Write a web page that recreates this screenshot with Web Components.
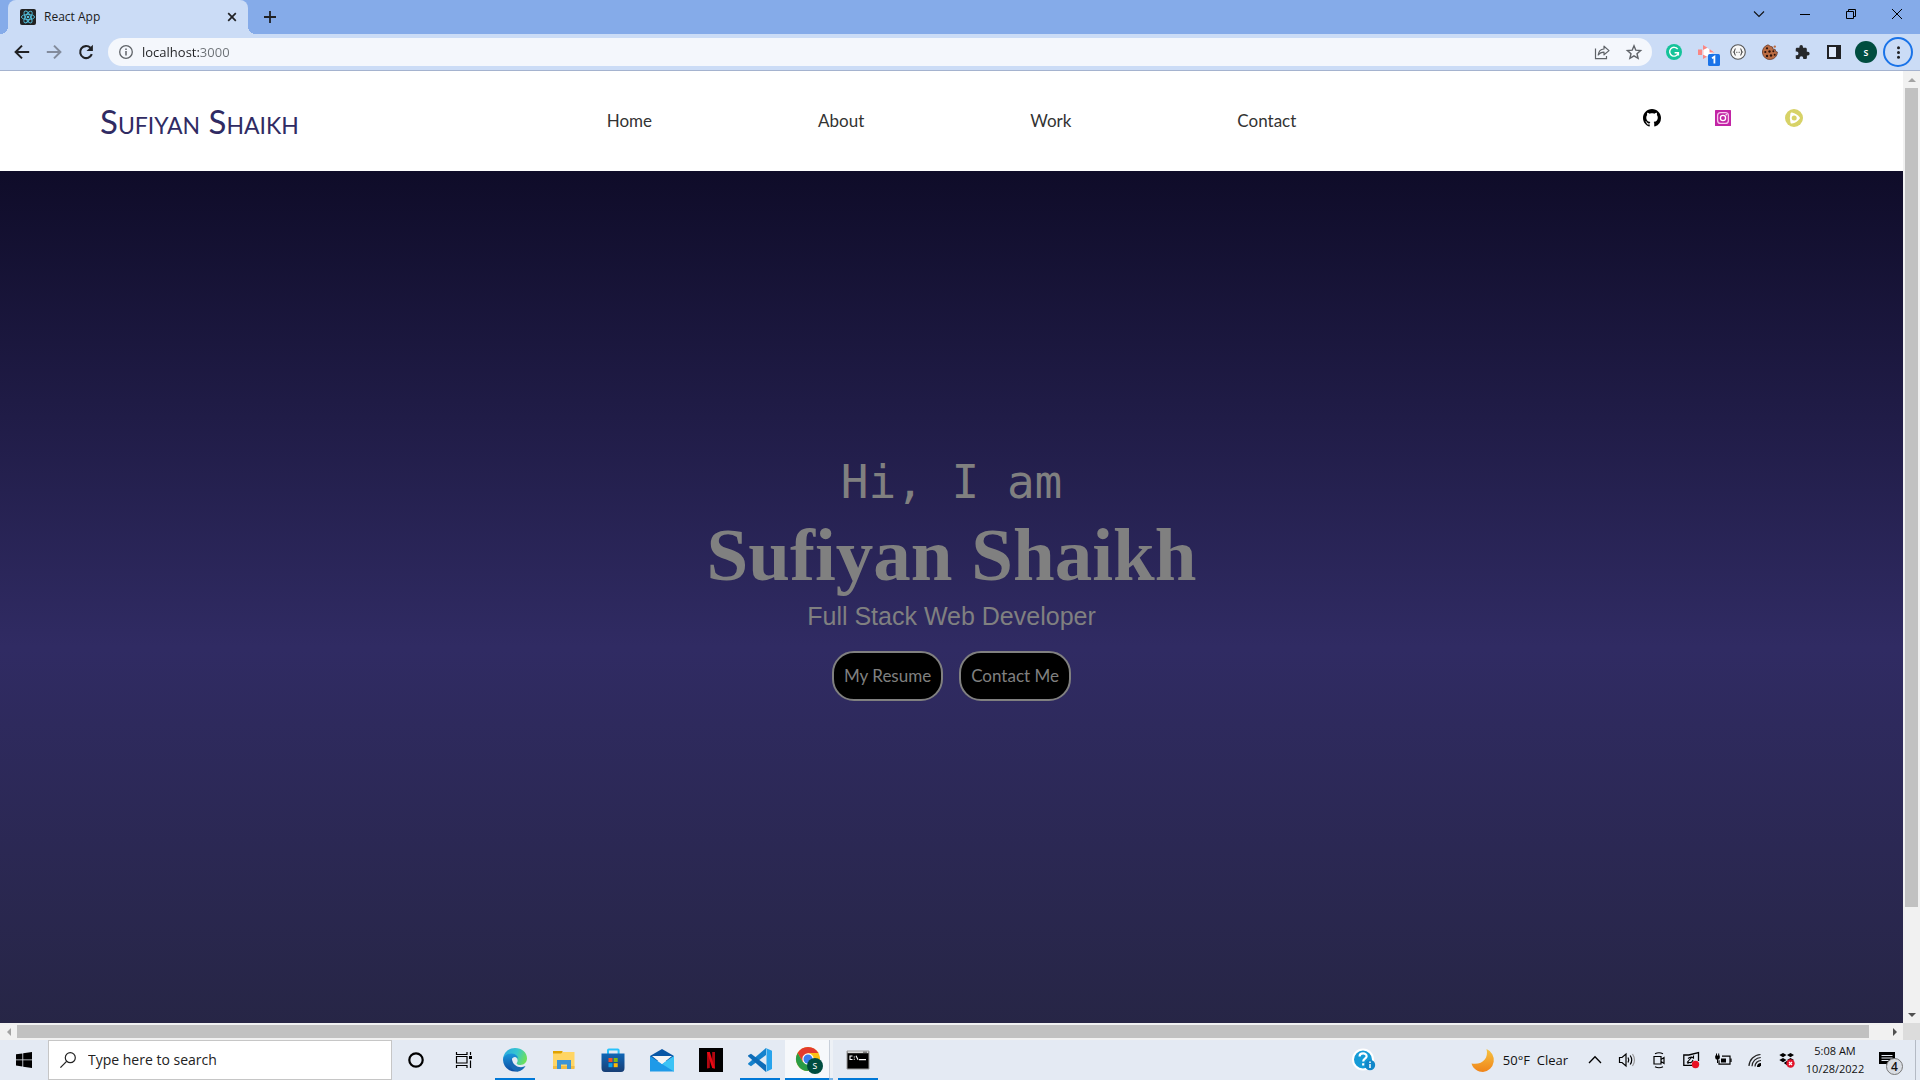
<!DOCTYPE html>
<html lang="en">
<head>
<meta charset="utf-8">
<title>React App</title>
<style>
html, body { margin: 0; height: 100%; }
body { display: flex; flex-direction: column; overflow: hidden; font-family: "Open Sans", "Noto Sans", sans-serif; color: #1b1b1b; }
browser-frame { flex: 1; min-height: 0; }
</style>
</head>
<body>
<browser-frame>
  <tab-strip slot="chrome"></tab-strip>
  <address-bar slot="chrome"></address-bar>
  <site-header></site-header>
  <hero-banner></hero-banner>
</browser-frame>
<task-bar></task-bar>

<script>
const ICONS = {
  react: ['0 0 16 16', '<rect width="16" height="16" rx="2" fill="#222"/><g fill="none" stroke="#53c1de" stroke-width=".9"><ellipse cx="8" cy="8" rx="6.6" ry="2.6"/><ellipse cx="8" cy="8" rx="6.6" ry="2.6" transform="rotate(60 8 8)"/><ellipse cx="8" cy="8" rx="6.6" ry="2.6" transform="rotate(120 8 8)"/></g><circle cx="8" cy="8" r="1.3" fill="#53c1de"/>'],
  close: ['0 0 10 10', '<path d="M1.2 1.2l7.6 7.6M8.8 1.2L1.2 8.8" stroke="#202124" stroke-width="1.7"/>'],
  plus: ['0 0 12 12', '<path d="M6 0v12M0 6h12" stroke="#202124" stroke-width="1.8"/>'],
  chevron: ['0 0 12 12', '<path d="M1 3.5l5 5 5-5" fill="none" stroke="#111" stroke-width="1.1"/>'],
  minimise: ['0 0 10 10', '<path d="M0 5.5h10" stroke="#000"/>'],
  restore: ['0 0 10 10', '<path d="M.5 2.5h7v7h-7zM2.5 2.5v-2h7v7h-2" fill="none" stroke="#000"/>'],
  exit: ['0 0 10 10', '<path d="M0 0l10 10M10 0L0 10" stroke="#000"/>'],
  back: ['0 0 16 16', '<path d="M15.2 8H2M8 1.6L1.6 8 8 14.4" fill="none" stroke="#202124" stroke-width="2"/>'],
  forward: ['0 0 16 16', '<path d="M.8 8H14M8 1.6L14.4 8 8 14.4" fill="none" stroke="#828b9c" stroke-width="2"/>'],
  reload: ['0 0 16 16', '<path d="M13.8 10.2A6 6 0 1 1 12.4 3.8" fill="none" stroke="#202124" stroke-width="2.1"/><path d="M14.9.7v6.4H8.5z" fill="#202124"/>'],
  info: ['0 0 14 14', '<circle cx="7" cy="7" r="6.3" fill="none" stroke="#5f6368" stroke-width="1.3"/><path d="M7 6v4.4M7 3.4V5" stroke="#5f6368" stroke-width="1.5"/>'],
  share: ['0 0 16 16', '<path d="M1.5 4.5v10.2h11V12" fill="none" stroke="#5f6368" stroke-width="1.2"/><path d="M4.2 11C4.6 7.2 6.6 5.2 10 5V2.2l5 4.4-5 4.2V8.2C7.4 8.2 5.6 9 4.2 11z" fill="none" stroke="#5f6368" stroke-width="1.2" stroke-linejoin="round"/>'],
  star: ['0 0 16 16', '<path d="M8 1.8l1.8 4.4 4.8.4-3.6 3.1 1.1 4.6L8 11.8l-4.1 2.5L5 9.7 1.4 6.6l4.8-.4z" fill="none" stroke="#5f6368" stroke-width="1.4"/>'],
  grammarly: ['0 0 16 16', '<circle cx="8" cy="8" r="8" fill="#15c39a"/><path d="M11.7 5.2A4.4 4.4 0 1 0 12.3 9M8.6 8.8h3.8v2.8" fill="none" stroke="#fff" stroke-width="1.4"/>'],
  recorder: ['-3 0 22 22', '<path d="M5 4.5L16 11 5 17.500z" fill="#fff"/><path d="M0 8.500h4v5.500H0zM5 4l4.500 2.800L5 9zM11.500 8l5 3.500h-5zM5 18v-4.500l4 2.300z" fill="#fa8784"/><path d="M5 9v4.500" stroke="#ffc4c2" stroke-width="1"/><rect x="10" y="13" width="12" height="12" rx="1.500" fill="#1a73e8"/><path d="M14 17.200l2.400-1.500V22.500" fill="none" stroke="#fff" stroke-width="1.800"/>'],
  braces: ['0 0 16 16', '<circle cx="8" cy="8" r="7.300" fill="#f8f8f8" stroke="#555" stroke-width="1.100"/><path d="M5.700 4.800c-1.400 0-.6 2.600-1.900 3.200 1.300.6.5 3.200 1.900 3.200M10.300 4.800c1.400 0 .6 2.600 1.900 3.200-1.300.6-.5 3.200-1.900 3.200" fill="none" stroke="#444" stroke-width="1.100"/><path d="M6 8.300h4" stroke="#777" stroke-dasharray="1 .5"/>'],
  cookie: ['0 0 16 16', '<path d="M6 .8A7.500 7.500 0 1 0 15.400 8l-1.700-.6-.5-2-2.300-.3-.3-2.100-2.200-.7z" fill="#bb6c43" stroke="#5c2d1c" stroke-width=".7"/><circle cx="12.800" cy="2.600" r="1.200" fill="#bb6c43"/><g fill="#2b130d"><circle cx="5" cy="4.300" r="1.100"/><circle cx="3.300" cy="8" r="1.100"/><circle cx="7.500" cy="7.500" r="1.200"/><circle cx="11.300" cy="7.300" r="1"/><circle cx="5" cy="12" r="1.200"/><circle cx="9" cy="11.500" r="1.200"/><circle cx="12.700" cy="10.700" r="1"/></g>'],
  puzzle: ['0 0 16 16', '<path d="M13.600 7.300h-1V4.400c0-.8-.6-1.400-1.400-1.400H8.500V2a1.900 1.900 0 0 0-3.800 0v1H2.200C1.400 3 .8 3.600.8 4.400V7h.9a2 2 0 0 1 0 4H.8v2.600c0 .8.6 1.400 1.400 1.400h2.600v-1a2 2 0 0 1 4 0v1h2.500c.8 0 1.400-.6 1.400-1.400v-2.500h1a1.900 1.900 0 0 0 0-3.800z" fill="#26282b"/>'],
  panel: ['0 0 14 14', '<path d="M1 1h12v12H1z" fill="#dfe9fa" stroke="#202124" stroke-width="2"/><path d="M9 1h5v12H9z" fill="#202124"/>'],
  dots: ['0 0 16 16', '<g fill="#202124"><circle cx="8" cy="3" r="1.600"/><circle cx="8" cy="8" r="1.600"/><circle cx="8" cy="13" r="1.600"/></g>'],
  github: ['0 0 16 16', '<path fill-rule="evenodd" d="M8 0C3.580 0 0 3.580 0 8c0 3.540 2.290 6.530 5.470 7.590.4.070.55-.17.55-.38 0-.19-.01-.82-.01-1.490-2.010.37-2.530-.49-2.690-.94-.09-.23-.48-.94-.82-1.130-.28-.15-.68-.52-.01-.53.63-.01 1.080.58 1.230.82.72 1.210 1.870.87 2.330.66.070-.52.28-.87.51-1.070-1.780-.2-3.640-.89-3.640-3.950 0-.87.31-1.590.82-2.150-.08-.2-.36-1.020.08-2.120 0 0 .67-.21 2.200.82.64-.18 1.320-.27 2-.27s1.360.09 2 .27c1.530-1.040 2.200-.82 2.200-.82.44 1.100.16 1.920.08 2.120.51.56.82 1.270.82 2.150 0 3.070-1.870 3.750-3.650 3.950.29.25.54.73.54 1.480 0 1.070-.01 1.930-.01 2.200 0 .21.15.46.55.38A8.010 8.010 0 0 0 16 8c0-4.420-3.580-8-8-8z"/>'],
  instagram: ['0 0 18 18', '<rect x="1" y="1" width="16" height="16" rx=".6" fill="#c224a5"/><rect x="3.600" y="3.600" width="10.800" height="10.800" rx="3" fill="none" stroke="#f6c6ec" stroke-width="1.300"/><circle cx="9" cy="9" r="2.600" fill="none" stroke="#fff" stroke-width="1.300"/><circle cx="12.200" cy="5.800" r=".8" fill="#fff"/>'],
  player: ['0 0 18 18', '<circle cx="9" cy="9" r="9" fill="#d7d267"/><path d="M6.700 4.700c2.600.5 5.300 2.100 7 4.300-1.700 2.300-4.400 3.900-7 4.400-.9-2.800-.9-5.900 0-8.700z" fill="#fff" stroke="#fff" stroke-width="2.400" stroke-linejoin="round"/><circle cx="9.200" cy="9" r="2.500" fill="#d7d267"/>'],
  windows: ['0 0 16 16', '<path d="M0 2.300l6.400-.9v6.100H0zM7.200 1.300L16 0v7.500H7.200zM0 8.300h6.400v6.200L0 13.600zM7.200 8.300H16V16l-8.800-1.300z"/>'],
  search: ['0 0 16 16', '<circle cx="10.300" cy="5.700" r="5" fill="none" stroke="#222" stroke-width="1.200"/><path d="M6.600 9.400L.4 15.600" stroke="#222" stroke-width="1.300"/>'],
  cortana: ['0 0 16 16', '<circle cx="8" cy="8" r="6.700" fill="none" stroke="#000" stroke-width="2.200"/>'],
  taskview: ['0 0 16 16', '<path d="M.5 0v2.500h10.500V0M.5 16v-2.500h10.500V16M.5 4.500h10.500v6.500H.5z" fill="none" stroke="#000" stroke-width="1.200"/><path d="M14.500 0v3M14.500 8.500V16" stroke="#000" stroke-width="1.200"/><path d="M13 4h3v3h-3z"/>'],
  edge: ['0 0 24 24', '<defs><linearGradient id="a" x1="0" y1=".2" x2="1" y2=".5"><stop offset="0" stop-color="#2aa9e0"/><stop offset=".55" stop-color="#36c6cf"/><stop offset="1" stop-color="#6ee05a"/></linearGradient><linearGradient id="b" x1="0" y1="0" x2="0" y2="1"><stop offset="0" stop-color="#1b98dd"/><stop offset="1" stop-color="#0c4aa0"/></linearGradient></defs><path d="M0 11C.7 4.500 5.800 0 12 0c7 0 12 4.800 12 10.300 0 4-3 6.700-6.600 6.700-2.800 0-4.200-1.100-3.600-2 1.900-2.700.5-6.500-4-6.500C5.400 8.500 1.500 9.500 0 11z" fill="url(#a)"/><path d="M0 12C0 8.700 3.800 5.500 8.500 5.500c4.400 0 6.800 3.200 6.800 6 0-1.500-1.800-2.800-3.500-2.600C8.500 9.300 7.400 13 8.800 16.500c1.500 3.800 5.500 6 9.500 5.300A12 12 0 0 1 0 12z" fill="url(#b)"/><path d="M8.800 10.500C5 15 8 22.500 14.300 23.700 18 23.300 21 21 22.500 18c-4.600 2.600-12.700 1-13.700-7.500z" fill="#1668b4"/>'],
  folder: ['0 0 24 24', '<path d="M1 3h9.500v4H1z" fill="#e0a200"/><path d="M1 5.500h8l2-1.500h11.500v16H1z" fill="#ffd564"/><path d="M1 18h21.500v3H1z" fill="#f3bd43"/><path d="M5 21v-9h14v9h-4v-4.500H9V21z" fill="#3c94d6"/>'],
  store: ['0 0 24 24', '<path d="M7 7V2.200Q7 1.500 7.800 1.500h9q.8 0 .8.700V7" fill="none" stroke="#28c2fb" stroke-width="2"/><defs><linearGradient id="s" x1="0" y1="0" x2="0" y2="1"><stop offset="0" stop-color="#0f66b6"/><stop offset="1" stop-color="#183f75"/></linearGradient></defs><path d="M.5 5.500h23V20q0 4-3.500 4H4Q.5 24 .5 20z" fill="url(#s)"/><path d="M7.500 10h4v4h-4z" fill="#f2502b"/><path d="M12.700 10h4v4h-4z" fill="#80ba13"/><path d="M7.500 15.200h4v4h-4z" fill="#08a3ef"/><path d="M12.700 15.200h4v4h-4z" fill="#feb903"/>'],
  mail: ['0 0 24 24', '<path d="M0 8L12 1l12 7v5H0z" fill="#0957a5"/><path d="M0 8v15.500h24V8L12 16z" fill="#1e9ae8"/><path d="M12 16l12-8v15.500z" fill="#3cc3f5"/><path d="M2 8h20l-10 8z" fill="#f5f5f5"/>'],
  netflix: ['0 0 24 24', '<path d="M0 0h24v24H0z"/><path d="M8 4h2.800v16L8 20.400zM13.200 4H16v16.400l-2.800-.4z" fill="#b00710"/><path d="M8 4h2.800L16 20.400l-2.800-.4z" fill="#e50914"/>'],
  vscode: ['0 0 24 24', '<path d="M18 0v7L3 18.200.3 16.500q-.5-.7 0-1.300z" fill="#1482cd"/><path d="M18 24v-7L3 5.700.3 7.300q-.5.600 0 1.300z" fill="#0d6cb8"/><path d="M17.700 0L24 2.800v18.300L17.700 24q1.200-.7.8-3V3q.2-2.200-.8-3z" fill="#27a3ec"/>'],
  chrome: ['0 0 26 26', '<circle cx="12" cy="12" r="12" fill="#fbc116"/><path d="M12 6h10.400a12 12 0 0 0-20.800 0l5.200 9z" fill="#e33b2e"/><path d="M1.600 6A12 12 0 0 0 12 24l5.200-9-10.400 0z" fill="#2a9c47"/><circle cx="12" cy="12" r="5.700" fill="#fff"/><circle cx="12" cy="12" r="4.500" fill="#3b7ded"/>'],
  cmd: ['0 0 24 24', '<path d="M1 3h22v18H1z" stroke="#9a9a9a"/><path d="M1.500 3.200h21v2h-21z" fill="#d8d8d8"/><path d="M17 4.200h4" stroke="#555"/><path d="M6.500 8H4v3.500h2.500M8.300 8.500v1M8.300 10.800v1M10 7.800l2 4M13 11.600h7" fill="none" stroke="#fff" stroke-width="1.100"/>'],
  help: ['0 0 24 24', '<circle cx="11" cy="11.500" r="10" fill="#159bd7" stroke="#fff" stroke-width="2"/><path d="M7.600 8.500c0-4 7-4 7-.3 0 2.600-3.400 2.500-3.400 5.300M11.200 15.300v2.200" fill="none" stroke="#fff" stroke-width="2.200"/><circle cx="18" cy="17" r="5.200" fill="#1187c9"/><path d="M18 16v4M18 13.500V15" stroke="#fff" stroke-width="1.500"/>'],
  moon: ['0 0 24 24', '<defs><linearGradient id="m" x1="0" y1="0" x2="0" y2="1"><stop offset="0" stop-color="#f5c342"/><stop offset="1" stop-color="#f08419"/></linearGradient></defs><path d="M15.500 1A12 12 0 0 1 12 24C7 24 2 21 .5 15.500C11 17.500 18 10.500 15.500 1z" fill="url(#m)"/>'],
  caret: ['0 0 16 16', '<path d="M2 11l6-6.300L14 11" fill="none" stroke="#000" stroke-width="1.300"/>'],
  volume: ['0 0 18 18', '<path d="M1.500 6.500H4l4-3.500v12l-4-3.500H1.500z" fill="none" stroke="#000" stroke-width="1.200"/><path d="M10 6.500q1.500 2.500 0 5M12.200 4.500q3 4.500 0 9" fill="none" stroke="#000" stroke-width="1.200"/><path d="M14.500 3q4 6 0 12" fill="none" stroke="#999" stroke-width="1.200"/>'],
  camera: ['0 0 16 16', '<path d="M3 4.500h7v7.500H3zM10 7.500l3-2v6l-3-2" fill="none" stroke="#000" stroke-width="1.200"/><path d="M4 1.700Q8-.3 12 1.700M4 14.700q4 2 8 0" fill="none" stroke="#000" stroke-width="1.100"/>'],
  update: ['0 0 18 18', '<path d="M11 14.300H1.800V4h5L16.500 1.500V10" fill="none" stroke="#000" stroke-width="1.300"/><path d="M5 11.500l4.500-5M6 7.500Q9 5 11.500 7V4.500M11 9q-1.500 4-5 2v2" fill="none" stroke="#000" stroke-width="1.100"/><circle cx="13.500" cy="13.500" r="3.700" fill="#e81123"/>'],
  battery: ['0 0 18 18', '<path d="M8 5.200h8v8H5v-4" fill="none" stroke="#000" stroke-width="1.200"/><path d="M16.300 7.500h1.300v3.500h-1.300zM7 7.500h5v4H7z"/><path d="M1.200 4.500h4.600v2.300q0 2-2.300 2T1.200 6.800zM2 2.500h1v2H2zM4.200 2.500h1v2h-1zM3 8h1v4H3z"/>'],
  wifi: ['0 0 16 16', '<path d="M2 14A12 12 0 0 1 13.500 2.500M5 14.300A9 9 0 0 1 13.800 5.500M8 14.500A6 6 0 0 1 14 8.500" fill="none" stroke="#222" stroke-width="1.200"/><path d="M10 15a4 4 0 0 1 4-4v2.500L12.500 15z"/>'],
  dropbox: ['0 0 18 18', '<path d="M5 2l3.500 2L5 6.300 1.300 4zM12.500 2L16 4l-3.500 2.300L9 4zM5 7l3.500 2L5 11.300 1.300 9zM12.500 7L16 9l-3.500 2.300L9 9zM8.800 10l3 2-3 2.200-3-2.200z"/><circle cx="12.500" cy="12.500" r="4.200" fill="#e3132b"/><path d="M11 11l3 3M14 11l-3 3" stroke="#fff" stroke-width="1.200"/>'],
  note: ['0 0 16 16', '<path d="M0 0h16v12H11v4l-4-4H0z"/><path d="M2.500 3.500h11M2.500 6h11M2.500 8.500h7" stroke="#e4eaf3" stroke-width="1.100"/>']
};

function define(name, html) {
  const t = document.createElement('template');
  t.innerHTML = html;
  customElements.define(name, class extends HTMLElement {
    constructor() {
      super();
      this.attachShadow({ mode: 'open' }).append(t.content.cloneNode(true));
    }
  });
}

class UiIcon extends HTMLElement {
  constructor() { super(); this.attachShadow({ mode: 'open' }); }
  connectedCallback() {
    const [box, art] = ICONS[this.getAttribute('name')];
    const size = this.getAttribute('size') || 16;
    this.shadowRoot.innerHTML = `<style>:host{display:block;flex:none}svg{display:block;overflow:visible}</style>
      <svg width="${size}" height="${size}" viewBox="${box}" aria-hidden="true">${art}</svg>`;
  }
}
customElements.define('ui-icon', UiIcon);

define('icon-button', `<style>
  :host { display: flex; flex: none; width: 32px; }
  button { flex: 1; position: relative; display: flex; align-items: center; justify-content: center; border: 0; padding: 0; background: none; font: inherit; color: inherit; }
</style><button type="button" aria-label="Action"><slot></slot></button>`);

define('tab-strip', `<style>
  :host { display: flex; height: 34px; background: #85abe9; padding-left: 8px; }
  .tab { position: relative; display: flex; align-items: center; width: 240px; box-sizing: border-box; padding: 0 11px 0 12px; border-radius: 8px 8px 0 0; background: #cbdcf6; }
  .tab::before, .tab::after { content: ""; position: absolute; bottom: 0; width: 8px; height: 8px; }
  .tab::before { right: 100%; background: radial-gradient(circle at 0 0, transparent 8px, #cbdcf6 8px); }
  .tab::after { left: 100%; background: radial-gradient(circle at 100% 0, transparent 8px, #cbdcf6 8px); }
  .title { flex: 1; margin-left: 8px; font-size: 12px; line-height: 16px; }
  .close { width: 10px; }
  .new { width: 44px; }
  .controls { display: flex; margin-left: auto; height: 28px; }
  .controls icon-button { width: 46px; }
</style>
<div class="tab"><ui-icon name="react"></ui-icon><span class="title">React App</span><icon-button class="close"><ui-icon name="close" size="10"></ui-icon></icon-button></div>
<icon-button class="new"><ui-icon name="plus" size="12"></ui-icon></icon-button>
<div class="controls">
  <icon-button><ui-icon name="chevron" size="12"></ui-icon></icon-button>
  <icon-button><ui-icon name="minimise" size="10"></ui-icon></icon-button>
  <icon-button><ui-icon name="restore" size="10"></ui-icon></icon-button>
  <icon-button><ui-icon name="exit" size="10"></ui-icon></icon-button>
</div>`);

define('address-bar', `<style>
  :host { display: flex; align-items: center; height: 36px; padding: 0 6px; background: #cbdcf6; border-bottom: 1px solid #a5b3cf; }
  .omnibox { flex: 1; display: flex; align-items: center; height: 28px; margin: 0 6px; padding: 0 2px 0 11px; border-radius: 14px; background: #f4f7fc; }
  input { flex: 1; min-width: 0; margin: 0 0 0 9px; padding: 0; border: 0; outline: 0; font: 13px/20px "Open Sans", sans-serif; color: transparent; background: linear-gradient(90deg, #202124 57px, #6b7075 57px); -webkit-background-clip: text; background-clip: text; }
  .avatar { display: flex; align-items: center; justify-content: center; width: 22px; height: 22px; border-radius: 50%; background: #004d40; color: #fff; font: 600 10px/22px "Open Sans", sans-serif; }
  .ring { display: flex; align-items: center; justify-content: center; box-sizing: border-box; width: 30px; height: 30px; border: 2px solid #1a73e8; border-radius: 50%; }
</style>
<icon-button><ui-icon name="back"></ui-icon></icon-button>
<icon-button><ui-icon name="forward"></ui-icon></icon-button>
<icon-button><ui-icon name="reload"></ui-icon></icon-button>
<div class="omnibox"><ui-icon name="info" size="14"></ui-icon>
  <input type="text" aria-label="Address" value="localhost:3000">
  <icon-button><ui-icon name="share"></ui-icon></icon-button>
  <icon-button><ui-icon name="star"></ui-icon></icon-button>
</div>
<icon-button><ui-icon name="grammarly"></ui-icon></icon-button>
<icon-button><ui-icon name="recorder" size="22"></ui-icon></icon-button>
<icon-button><ui-icon name="braces"></ui-icon></icon-button>
<icon-button><ui-icon name="cookie"></ui-icon></icon-button>
<icon-button><ui-icon name="puzzle" size="15"></ui-icon></icon-button>
<icon-button><ui-icon name="panel" size="14"></ui-icon></icon-button>
<icon-button><span class="avatar">s</span></icon-button>
<icon-button><span class="ring"><ui-icon name="dots" size="15"></ui-icon></span></icon-button>`);

define('browser-frame', `<style>
  :host { display: grid; grid-template: auto minmax(0, 1fr) 17px / minmax(0, 1fr) 17px; }
  .chrome { grid-column: 1 / 3; }
  .view { overflow: hidden; background: #fff; }
  .bar { display: flex; align-items: center; background: #f1f1f1; }
  .arrow { flex: none; display: flex; align-items: center; justify-content: center; width: 17px; height: 17px; }
  .thumb { background: #c1c1c1; }
  .v { flex-direction: column; }
  .v .thumb { width: 13px; height: 86%; margin-bottom: auto; }
  .h .thumb { flex: 1; height: 13px; margin-right: 17px; }
  .corner { background: #dcdcdc; }
</style>
<div class="chrome"><slot name="chrome"></slot></div>
<div class="view"><slot></slot></div>
<div class="bar v"><span class="arrow"><svg width="8" height="4"><path d="M0 4l4-4 4 4z" fill="#a3a3a3"/></svg></span><span class="thumb"></span><span class="arrow"><svg width="8" height="4"><path d="M0 0l4 4 4-4z" fill="#505050"/></svg></span></div>
<div class="bar h"><span class="arrow"><svg width="4" height="8"><path d="M4 0L0 4l4 4z" fill="#a3a3a3"/></svg></span><span class="thumb"></span><span class="arrow"><svg width="4" height="8"><path d="M0 0l4 4-4 4z" fill="#505050"/></svg></span></div>
<div class="corner"></div>`);

define('site-header', `<style>
  :host { display: grid; grid-template-columns: 1fr auto 1fr; align-items: center; height: 100px; box-sizing: border-box; padding: 0 100px; background: #fff; font-family: Lato, sans-serif; }
  a { color: inherit; text-decoration: none; }
  .logo { font-size: 33px; line-height: 44px; font-variant: small-caps; color: #302b63; }
  nav { display: flex; gap: 166px; font-size: 17px; line-height: 26px; color: #333; }
  .social { display: flex; justify-content: flex-end; gap: 53px; padding-bottom: 6px; }
</style>
<a class="logo" href="#">Sufiyan Shaikh</a>
<nav><a href="#home">Home</a><a href="#about">About</a><a href="#work">Work</a><a href="#contact">Contact</a></nav>
<div class="social">
  <a href="#github" aria-label="GitHub"><ui-icon name="github" size="18"></ui-icon></a>
  <a href="#instagram" aria-label="Instagram"><ui-icon name="instagram" size="18"></ui-icon></a>
  <a href="#videos" aria-label="Videos"><ui-icon name="player" size="18"></ui-icon></a>
</div>`);

define('pill-button', `<style>
  :host { display: block; }
  button { height: 50px; padding: 0 10px; border: 2px solid #808080; border-radius: 22px; background: #000; color: #808080; font: 17px/26px Lato, sans-serif; }
</style><button type="button"><slot></slot></button>`);

define('hero-banner', `<style>
  :host { display: flex; flex-direction: column; align-items: center; justify-content: center; height: 100%; box-sizing: border-box; padding-bottom: 140px; background: linear-gradient(#0f0c29, #302b63, #24243e); color: #808080; text-align: center; }
  p, h1 { margin: 0; }
  .hello { font: 46px/58px "DejaVu Sans Mono", monospace; }
  h1 { font: bold 75px/88px "Liberation Serif", serif; }
  .role { font: 25px/34px "Liberation Sans", sans-serif; }
  .actions { display: flex; gap: 16px; margin-top: 18px; }
</style>
<p class="hello">Hi, I am</p>
<h1>Sufiyan Shaikh</h1>
<p class="role">Full Stack Web Developer</p>
<div class="actions"><pill-button>My Resume</pill-button><pill-button>Contact Me</pill-button></div>`);

define('task-button', `<style>
  :host { display: flex; flex: none; width: 48px; }
  button { flex: 1; position: relative; display: flex; align-items: center; justify-content: center; border: 0; padding: 0; background: none; font: inherit; }
  :host([open]) button::after { content: ""; position: absolute; bottom: 0; left: 4px; right: 4px; height: 2px; background: #0078d7; }
  :host([active]) button { background: linear-gradient(90deg, #f6f8fb 44px, #c9d0da 44px 45px, #edf1f6 45px); }
  :host([active]) button::after { left: 0; right: 0; background: linear-gradient(90deg, #0078d7 44px, #76b3e6 44px); }
</style><button type="button" aria-label="Application"><slot></slot></button>`);

define('task-bar', `<style>
  :host { display: flex; height: 40px; background: #e4eaf3; color: #111; }
  .search { display: flex; align-items: center; gap: 12px; width: 344px; box-sizing: border-box; padding: 0 11px; border: 1px solid #c6c6c6; background: #fff; }
  input { flex: 1; min-width: 0; padding: 0; border: 0; outline: 0; background: none; font: 14px/20px "Open Sans", sans-serif; color: #222; }
  input::placeholder { color: #222; opacity: 1; }
  .apps { display: flex; gap: 1px; margin-left: 3px; }
  .tray { display: flex; margin-left: auto; align-items: stretch; }
  .help { margin-right: 91px; }
  .weather { display: flex; align-items: center; gap: 8px; margin-right: 11px; font-size: 13px; line-height: 20px; }
  .weather span { white-space: pre; }
  .clock { display: flex; flex-direction: column; justify-content: center; width: 64px; text-align: center; font-size: 11px; line-height: 18px; }
  .note { width: 40px; margin-right: 8px; }
  .desktop { width: 4px; border-left: 1px solid #b4bac4; }
  .count { position: absolute; left: 19px; top: 18px; width: 15px; height: 15px; border: 1px solid #777; border-radius: 50%; background: #d9dde3; font: 600 12px/15px "Open Sans", sans-serif; text-align: center; }
  .who { position: absolute; left: 22px; top: 18px; width: 16px; height: 16px; border-radius: 50%; background: #004d40; color: #fff; font: 10px/14px "Open Sans", sans-serif; text-align: center; }
</style>
<task-button><ui-icon name="windows"></ui-icon></task-button>
<label class="search"><ui-icon name="search"></ui-icon><input type="text" aria-label="Search" placeholder="Type here to search"></label>
<task-button><ui-icon name="cortana"></ui-icon></task-button>
<task-button><ui-icon name="taskview"></ui-icon></task-button>
<div class="apps">
  <task-button open><ui-icon name="edge" size="24"></ui-icon></task-button>
  <task-button><ui-icon name="folder" size="24"></ui-icon></task-button>
  <task-button><ui-icon name="store" size="24"></ui-icon></task-button>
  <task-button><ui-icon name="mail" size="24"></ui-icon></task-button>
  <task-button><ui-icon name="netflix" size="24"></ui-icon></task-button>
  <task-button open><ui-icon name="vscode" size="24"></ui-icon></task-button>
  <task-button open active><ui-icon name="chrome" size="26"></ui-icon><span class="who">s</span></task-button>
  <task-button open><ui-icon name="cmd" size="24"></ui-icon></task-button>
</div>
<div class="tray">
  <icon-button class="help"><ui-icon name="help" size="24"></ui-icon></icon-button>
  <div class="weather"><ui-icon name="moon" size="24"></ui-icon><span>50°F  Clear</span></div>
  <icon-button><ui-icon name="caret"></ui-icon></icon-button>
  <icon-button><ui-icon name="volume" size="18"></ui-icon></icon-button>
  <icon-button><ui-icon name="camera"></ui-icon></icon-button>
  <icon-button><ui-icon name="update" size="18"></ui-icon></icon-button>
  <icon-button><ui-icon name="battery" size="18"></ui-icon></icon-button>
  <icon-button><ui-icon name="wifi"></ui-icon></icon-button>
  <icon-button><ui-icon name="dropbox" size="18"></ui-icon></icon-button>
  <div class="clock"><span>5:08 AM</span><span>10/28/2022</span></div>
  <icon-button class="note"><ui-icon name="note"></ui-icon><span class="count">4</span></icon-button>
  <div class="desktop"></div>
</div>`);
</script>
</body>
</html>
